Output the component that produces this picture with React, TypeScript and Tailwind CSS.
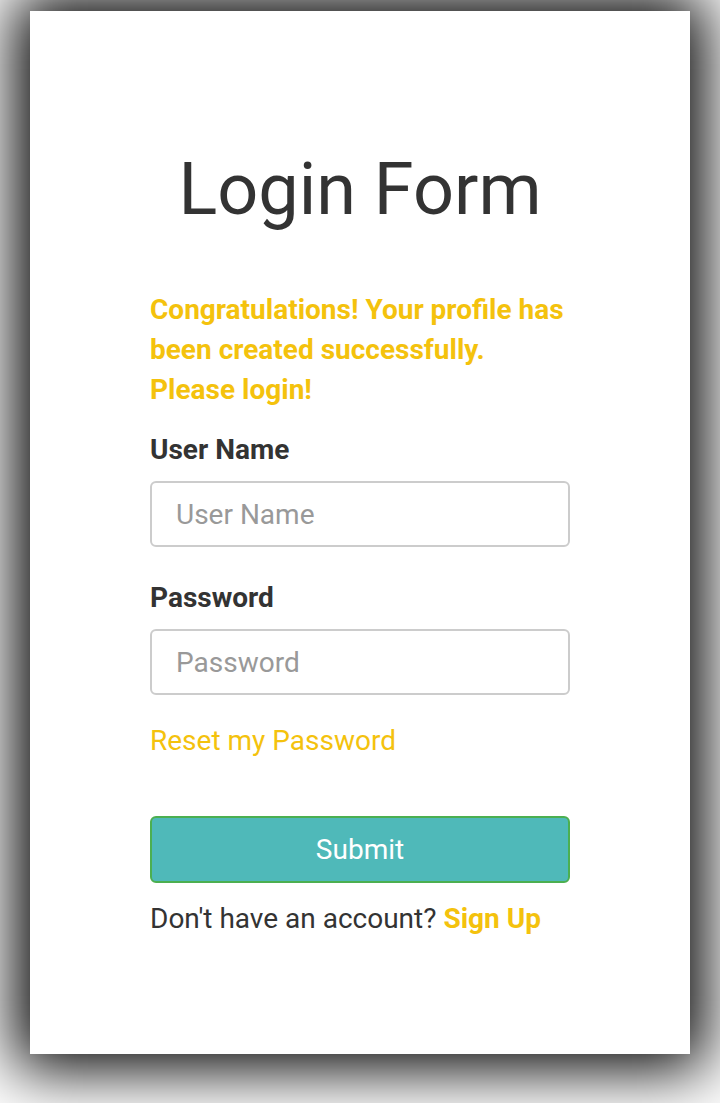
import { FC } from 'react';

const Field: FC<{ label: string; type: string; className?: string }> = ({ label, type, className }) => (
	<div className={className}>
		<label className="block text-[28px] font-bold leading-[40px] text-[#333]">{label}</label>
		<input
			type={type}
			placeholder={label}
			className="mt-[11px] block h-[66px] w-full rounded-[6px] border-2 border-[#ccc] bg-white px-[24px] text-[28px] text-[#333] outline-none placeholder:text-[#999]"
		/>
	</div>
);

export default function App() {
	return (
		<div className="min-h-[1103px] overflow-hidden bg-white pt-[11px] font-['Roboto',sans-serif]">
			<div className="mx-[30px] h-[1043px] bg-white pt-[137px] shadow-[0_0_60px_15px_#000]">
				<div className="mx-auto w-[420px]">
					<h1 className="text-center text-[72px] font-normal leading-[84px] text-[#333]">Login Form</h1>
					<p className="mt-[58px] text-[28px] font-bold leading-[40px] text-[#f4c20d]">
						Congratulations! Your profile has been created successfully. Please login!
					</p>
					<form onSubmit={(e) => e.preventDefault()}>
						<Field label="User Name" type="text" className="mt-[20px]" />
						<Field label="Password" type="password" className="mt-[31px]" />
						<a href="#" className="mt-[26px] block text-[28px] leading-[40px] text-[#f4c20d]">
							Reset my Password
						</a>
						<button
							type="submit"
							className="mt-[55px] block h-[67px] w-full rounded-[6px] border-2 border-[#4caf50] bg-[#4fb9b9] text-[28px] text-white"
						>
							Submit
						</button>
					</form>
					<p className="mt-[16px] text-[28px] leading-[40px] text-[#333]">
						Don't have an account?{' '}
						<a href="#" className="font-bold text-[#f4c20d]">
							Sign Up
						</a>
					</p>
				</div>
			</div>
		</div>
	);
}
